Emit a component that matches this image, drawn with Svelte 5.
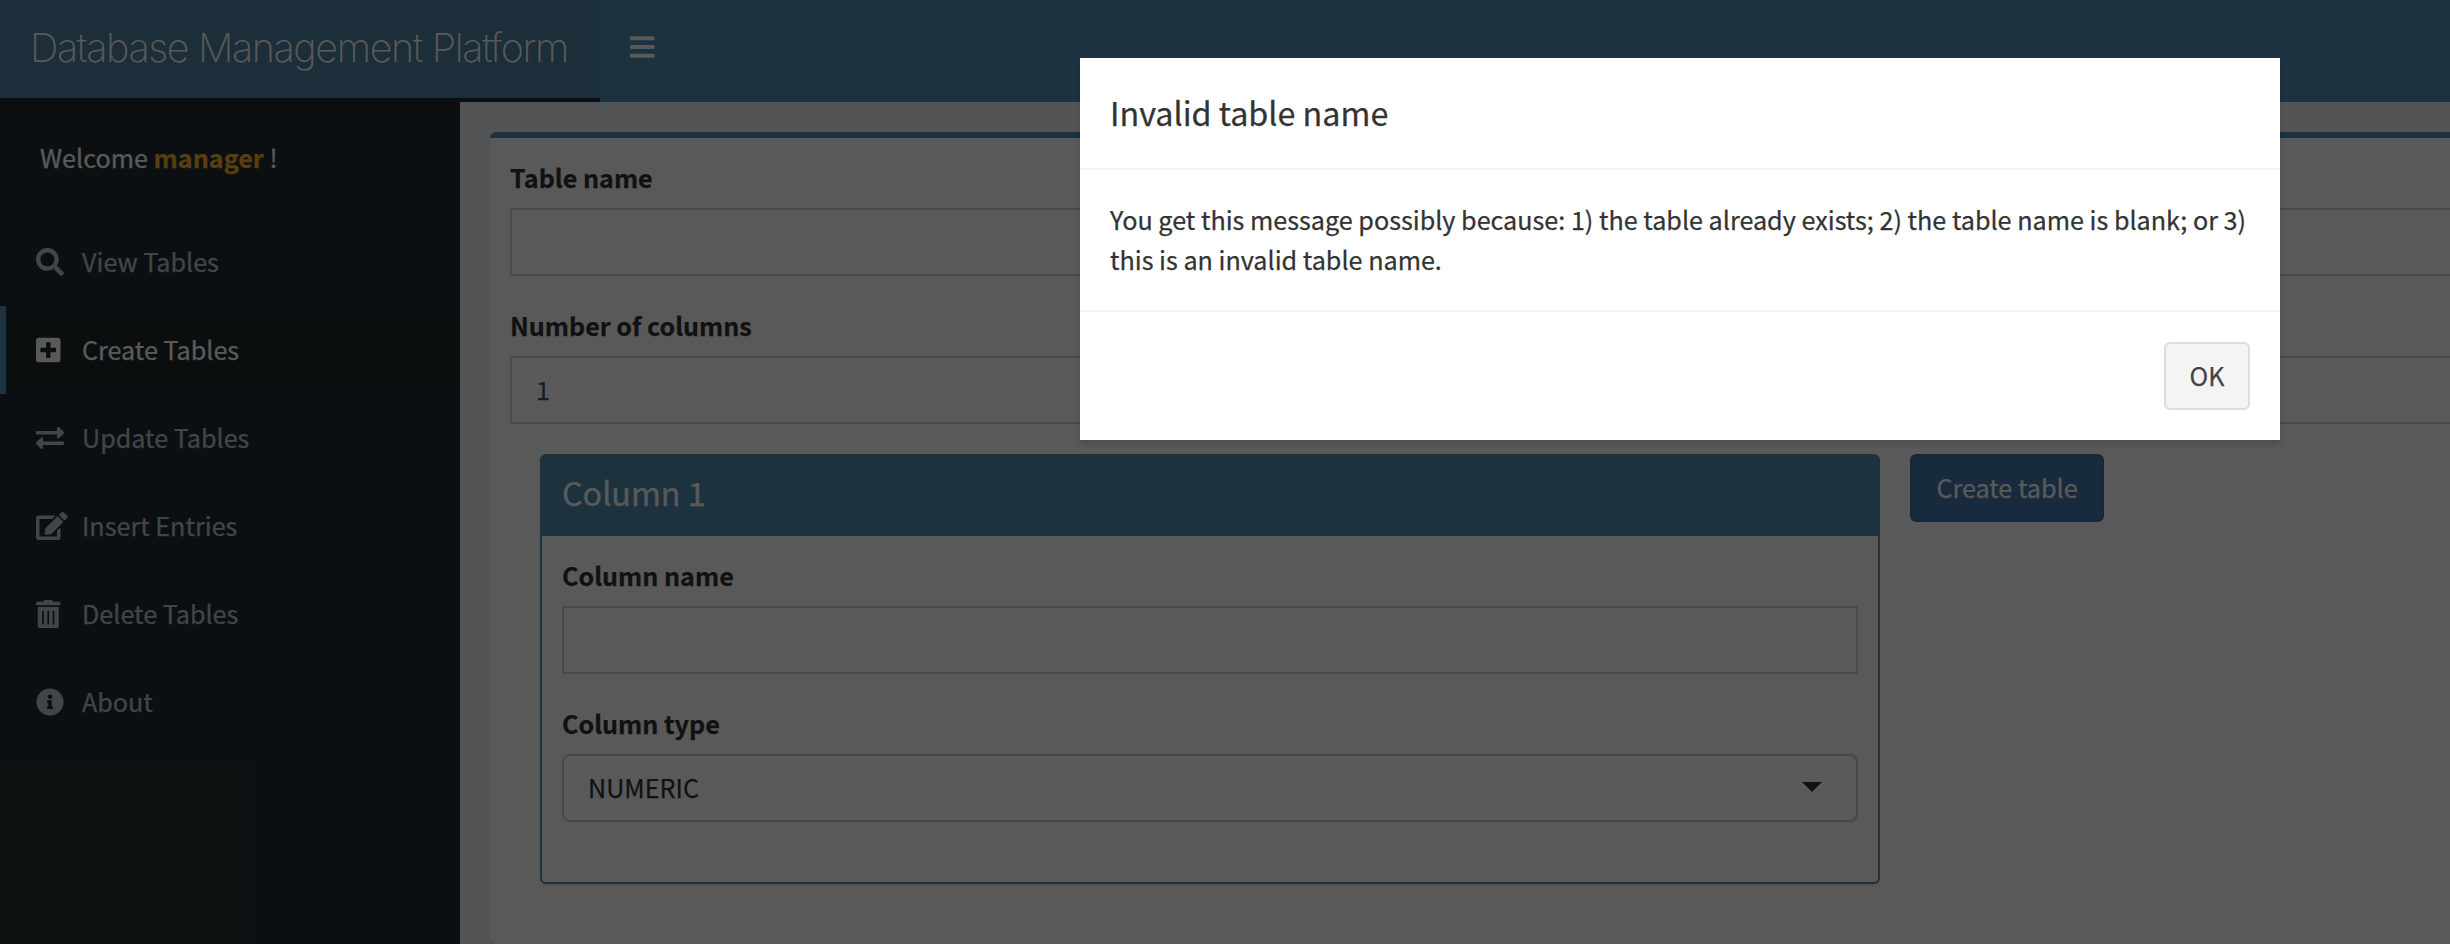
<script>
  const menu = [
    {
      label: 'View Tables',
      w: 512,
      d: 'M505 442.7L405.3 343c-4.5-4.5-10.6-7-17-7H372c27.6-35.3 44-79.7 44-128C416 93.1 322.9 0 208 0S0 93.1 0 208s93.1 208 208 208c48.3 0 92.7-16.4 128-44v16.3c0 6.4 2.5 12.5 7 17l99.7 99.7c9.4 9.4 24.6 9.4 33.9 0l28.3-28.3c9.4-9.4 9.4-24.6.1-34zM208 336c-70.7 0-128-57.2-128-128 0-70.7 57.2-128 128-128 70.7 0 128 57.2 128 128 0 70.7-57.2 128-128 128z'
    },
    {
      label: 'Create Tables',
      active: true,
      w: 448,
      d: 'M400 32H48C21.5 32 0 53.5 0 80v352c0 26.5 21.5 48 48 48h352c26.5 0 48-21.5 48-48V80c0-26.5-21.5-48-48-48zm-32 252c0 6.6-5.4 12-12 12h-92v92c0 6.6-5.4 12-12 12h-56c-6.6 0-12-5.4-12-12v-92H92c-6.6 0-12-5.4-12-12v-56c0-6.6 5.4-12 12-12h92v-92c0-6.6 5.4-12 12-12h56c6.6 0 12 5.4 12 12v92h92c6.6 0 12 5.4 12 12v56z'
    },
    {
      label: 'Update Tables',
      w: 512,
      d: 'M0 168v-16c0-13.255 10.745-24 24-24h360V80c0-21.367 25.899-32.042 40.971-16.971l80 80c9.372 9.373 9.372 24.569 0 33.941l-80 80C409.956 271.982 384 261.456 384 240v-48H24c-13.255 0-24-10.745-24-24zm488 152H128v-48c0-21.314-25.862-32.08-40.971-16.971l-80 80c-9.372 9.373-9.372 24.569 0 33.941l80 80C102.057 463.997 128 453.437 128 432v-48h360c13.255 0 24-10.745 24-24v-16c0-13.255-10.745-24-24-24z'
    },
    {
      label: 'Insert Entries',
      w: 576,
      d: 'M402.6 83.2l90.2 90.2c3.8 3.8 3.8 10 0 13.8L274.4 405.6l-92.8 10.3c-12.4 1.4-22.9-9.1-21.5-21.5l10.3-92.8L388.8 83.2c3.8-3.8 10-3.8 13.8 0zm162-22.9l-48.8-48.8c-15.2-15.2-39.9-15.2-55.2 0l-35.4 35.4c-3.8 3.8-3.8 10 0 13.8l90.2 90.2c3.8 3.8 10 3.8 13.8 0l35.4-35.4c15.2-15.3 15.2-40 0-55.2zM384 346.2V448H64V128h229.8c3.2 0 6.2-1.3 8.5-3.5l40-40c7.6-7.6 2.2-20.5-8.5-20.5H48C21.5 64 0 85.5 0 112v352c0 26.5 21.5 48 48 48h352c26.5 0 48-21.5 48-48V306.2c0-10.7-12.9-16-20.5-8.5l-40 40c-2.2 2.3-3.5 5.3-3.5 8.5z'
    },
    {
      label: 'Delete Tables',
      w: 448,
      d: 'M32 464a48 48 0 0 0 48 48h288a48 48 0 0 0 48-48V128H32zm272-256a16 16 0 0 1 32 0v224a16 16 0 0 1-32 0zm-96 0a16 16 0 0 1 32 0v224a16 16 0 0 1-32 0zm-96 0a16 16 0 0 1 32 0v224a16 16 0 0 1-32 0zM432 32H312l-9.4-18.7A24 24 0 0 0 281.1 0H166.8a23.72 23.72 0 0 0-21.4 13.3L136 32H16A16 16 0 0 0 0 48v32a16 16 0 0 0 16 16h416a16 16 0 0 0 16-16V48a16 16 0 0 0-16-16z'
    },
    {
      label: 'About',
      w: 512,
      d: 'M256 8C119.043 8 8 119.083 8 256c0 136.997 111.043 248 248 248s248-111.003 248-248C504 119.083 392.957 8 256 8zm0 110c23.196 0 42 18.804 42 42s-18.804 42-42 42-42-18.804-42-42 18.804-42 42-42zm56 254c0 6.627-5.373 12-12 12h-88c-6.627 0-12-5.373-12-12v-24c0-6.627 5.373-12 12-12h12v-64h-12c-6.627 0-12-5.373-12-12v-24c0-6.627 5.373-12 12-12h64c6.627 0 12 5.373 12 12v100h12c6.627 0 12 5.373 12 12v24z'
    }
  ];
</script>

<div class="screen">
  <div class="page">
    <header>
      <div class="brand"><span>Database Management Platform</span></div>
      <nav>
        <svg class="bars" viewBox="0 0 448 512">
          <rect y="60" width="448" height="72" rx="16" />
          <rect y="220" width="448" height="72" rx="16" />
          <rect y="380" width="448" height="72" rx="16" />
        </svg>
      </nav>
    </header>

    <div class="main">
      <aside>
        <p class="welcome">Welcome <b>manager</b> !</p>
        <ul>
          {#each menu as item}
            <li class:active={item.active}>
              <span class="icon">
                <svg viewBox="0 0 {item.w} 512" style="width: {(item.w / 512) * 28}px"><path d={item.d} /></svg>
              </span>
              <span class="text">{item.label}</span>
            </li>
          {/each}
        </ul>
      </aside>

      <section class="content">
        <div class="box">
          <div class="group">
            <label for="tname">Table name</label>
            <input id="tname" type="text" />
          </div>
          <div class="group">
            <label for="ncol">Number of columns</label>
            <input id="ncol" type="text" value="1" />
          </div>
          <div class="row">
            <div class="column-box">
              <h3>Column 1</h3>
              <div class="column-body">
                <div class="group">
                  <label for="cname">Column name</label>
                  <input id="cname" type="text" />
                </div>
                <div class="group">
                  <span class="label">Column type</span>
                  <div class="select">
                    <span>NUMERIC</span>
                    <i class="caret"></i>
                  </div>
                </div>
              </div>
            </div>
            <button class="primary">Create table</button>
          </div>
        </div>
      </section>
    </div>
  </div>

  <div class="backdrop">
    <div class="modal" role="dialog">
      <div class="modal-header"><h4>Invalid table name</h4></div>
      <div class="modal-body">
        <p>You get this message possibly because: 1) the table already exists; 2) the table name is blank; or 3) this is an invalid table name.</p>
      </div>
      <div class="modal-footer"><button class="ok">OK</button></div>
    </div>
  </div>
</div>

<style>
  :global(body) {
    overflow: hidden;
  }
  .screen {
    position: relative;
    width: 2450px;
    height: 944px;
    overflow: hidden;
    font-family: 'Noto Sans CJK SC', 'Noto Sans', sans-serif;
    font-size: 25.16px;
    line-height: 38px;
    color: #333;
    -webkit-text-stroke: 0.25px currentColor;
  }
  .screen * {
    box-sizing: border-box;
  }
  .page {
    display: flex;
    flex-direction: column;
    width: 3360px;
    height: 944px;
    background: #222d32;
  }
  header {
    display: flex;
    align-items: flex-start;
    height: 102px;
  }
  .brand {
    width: 600px;
    height: 98px;
    padding-left: 30px;
    background: #5083a5;
    color: #fff;
    font-family: Inter, 'Liberation Sans', sans-serif;
    font-size: 39.5px;
    font-weight: 200;
    line-height: 96px;
    letter-spacing: -1.4px;
    white-space: nowrap;
    -webkit-text-stroke: 0;
  }
  nav {
    flex: 1;
    height: 102px;
    padding: 33px 30px;
    background: #538fb5;
  }
  svg {
    display: block;
    height: 28px;
    fill: currentColor;
  }
  .bars {
    width: 24.5px;
    color: #fff;
  }
  .main {
    display: flex;
    flex: 1;
  }
  aside {
    width: 460px;
    padding-top: 36px;
    color: #b8c7ce;
  }
  .welcome {
    margin: 0 0 40px;
    padding: 0 0 2px 40px;
    color: #fff;
  }
  .welcome b {
    color: #f5b42c;
  }
  ul {
    margin: 0;
    padding: 0;
    list-style: none;
  }
  li {
    display: flex;
    align-items: center;
    height: 88px;
    padding-left: 30px;
    border-left: 6px solid transparent;
  }
  li.active {
    border-left-color: #538fb5;
    background: #1e282c;
    color: #fff;
  }
  .icon {
    width: 46px;
    padding-bottom: 1px;
  }
  .text {
    padding-bottom: 2px;
  }
  .content {
    flex: 1;
    padding: 30px;
    background: #ecf0f5;
  }
  .box {
    height: 812px;
    padding: 20px;
    border-top: 6px solid #538fb5;
    border-radius: 6px;
    background: #fff;
    box-shadow: 0 2px 2px rgba(0, 0, 0, 0.1);
  }
  .group {
    margin-bottom: 30px;
  }
  label,
  .label {
    display: block;
    margin-bottom: 10px;
    padding-bottom: 2px;
    font-size: 25.1px;
    font-weight: 700;
  }
  input {
    display: block;
    width: 100%;
    height: 68px;
    padding: 0 24px 2px;
    border: 2px solid #d3d4d7;
    border-radius: 0;
    background: #fff;
    color: #555;
    font: inherit;
  }
  .row {
    display: flex;
    align-items: flex-start;
    gap: 30px;
    padding-left: 30px;
  }
  .column-box {
    width: 1340px;
    height: 430px;
    border: 2px solid #538fb5;
    border-radius: 6px;
    background: #fff;
    box-shadow: 0 2px 2px rgba(0, 0, 0, 0.1);
  }
  h3 {
    height: 80px;
    margin: 0;
    padding-left: 20px;
    background: #538fb5;
    color: #fff;
    font-size: 32.3px;
    font-weight: 400;
    line-height: 72px;
  }
  .column-body {
    padding: 20px;
  }
  .select {
    display: flex;
    align-items: center;
    justify-content: space-between;
    height: 68px;
    padding: 0 34px 2px 24px;
    border: 2px solid #ccc;
    border-radius: 8px;
  }
  .caret {
    border: 10px solid transparent;
    border-top-color: #333;
    border-bottom: 0;
  }
  button {
    height: 68px;
    padding: 0 0 2px;
    border: 2px solid;
    border-radius: 6px;
    font: inherit;
    text-align: center;
  }
  .primary {
    width: 194px;
    border-color: #446f9e;
    background: #4678b1;
    color: #fff;
  }
  .backdrop {
    position: absolute;
    top: 0;
    left: 0;
    width: 3360px;
    height: 944px;
    padding-top: 58px;
    background: rgba(0, 0, 0, 0.65);
  }
  .modal {
    width: 1200px;
    height: 382px;
    margin: 0 auto;
    background: #fff;
    box-shadow: 0 4px 6px rgba(0, 0, 0, 0.125);
  }
  .modal-header {
    height: 112px;
    padding: 30px;
    border-bottom: 2px solid #f4f4f4;
  }
  h4 {
    margin: 0;
    font-size: 32.3px;
    font-weight: 400;
    line-height: 48px;
  }
  .modal-body {
    padding: 29px 30px 31px;
    line-height: 40px;
  }
  .modal-body p {
    margin: 0;
  }
  .modal-footer {
    display: flex;
    justify-content: flex-end;
    padding: 30px;
    border-top: 2px solid #f4f4f4;
  }
  .ok {
    width: 86px;
    border-color: #ddd;
    background: #f4f4f4;
    color: #444;
  }
</style>
